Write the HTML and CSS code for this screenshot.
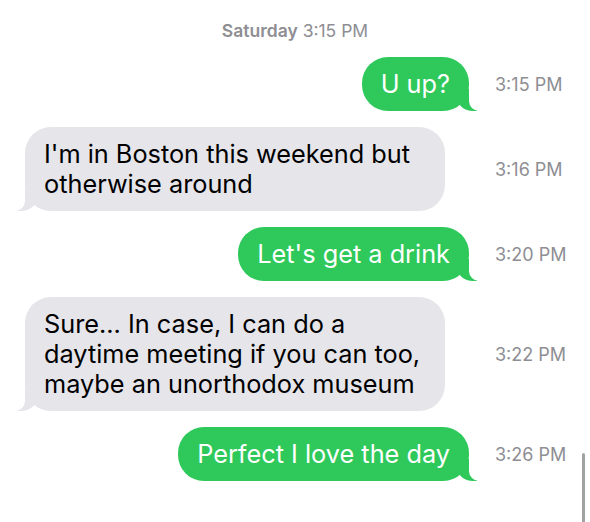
FILE: index.html
```
<!DOCTYPE html>
<html lang="en">
<head>
    <meta charset="UTF-8">
    <meta name="viewport" content="width=device-width, initial-scale=1.0">
    <title>Messages</title>
    <link rel="stylesheet" href="styles.css">
</head>
<body>
    <div class="thread">
        <div class="day-label"><b>Saturday</b> 3:15 PM</div>
        <div class="row sent">
            <div class="bubble">U up?</div>
            <span class="time">3:15 PM</span>
        </div>
        <div class="row received">
            <div class="bubble">I'm in Boston this weekend but otherwise around</div>
            <span class="time">3:16 PM</span>
        </div>
        <div class="row sent">
            <div class="bubble">Let's get a drink</div>
            <span class="time">3:20 PM</span>
        </div>
        <div class="row received">
            <div class="bubble">Sure... In case, I can do a daytime meeting if you can too, maybe an unorthodox museum</div>
            <span class="time">3:22 PM</span>
        </div>
        <div class="row sent">
            <div class="bubble">Perfect I love the day</div>
            <span class="time">3:26 PM</span>
        </div>
    </div>
    <div class="scroll-bar"></div>
</body>
</html>
```

FILE: styles.css
```
* {
    margin: 0;
    padding: 0;
    box-sizing: border-box;
}
body {
    background-color: #fff;
    font-family: Inter, "Liberation Sans", Arial, sans-serif;
    width: 590px;
    height: 522px;
    overflow: hidden;
    position: relative;
}
.thread {
    display: flex;
    flex-direction: column;
    gap: 16px;
    padding: 21px 0 0 25px;
}
.day-label {
    text-align: center;
    color: #8e8e93;
    font-size: 17.5px;
    line-height: 20px;
    margin-left: -25px;
}
.day-label b {
    font-weight: 600;
}
.row {
    display: grid;
    grid-template-columns: 444px 1fr;
    align-items: center;
}
.bubble {
    position: relative;
    font-size: 25.3px;
    line-height: 30px;
    padding: 12px 19px 12px 19px;
    border-radius: 26px;
    max-width: 420px;
}
.sent .bubble {
    justify-self: end;
    background-color: #2ec95a;
    color: #fff;
}
.received .bubble {
    justify-self: start;
    background-color: #e5e5ea;
    color: #000;
}
/* 气泡尾巴 */
.bubble::before,
.bubble::after {
    content: "";
    position: absolute;
    bottom: 0;
    height: 22px;
}
.sent .bubble::before {
    right: -8px;
    width: 20px;
    background-color: #2ec95a;
    border-bottom-left-radius: 16px 14px;
}
.sent .bubble::after {
    right: -26px;
    width: 26px;
    background-color: #fff;
    border-bottom-left-radius: 10px;
}
.received .bubble::before {
    left: -8px;
    width: 20px;
    background-color: #e5e5ea;
    border-bottom-right-radius: 16px 14px;
}
.received .bubble::after {
    left: -26px;
    width: 26px;
    background-color: #fff;
    border-bottom-right-radius: 10px;
}
.time {
    color: #8e8e93;
    font-size: 18px;
    padding-left: 26px;
}
.scroll-bar {
    position: absolute;
    left: 582px;
    top: 453px;
    width: 3px;
    height: 80px;
    border-radius: 2px;
    background-color: #a2a2a2;
}
```
